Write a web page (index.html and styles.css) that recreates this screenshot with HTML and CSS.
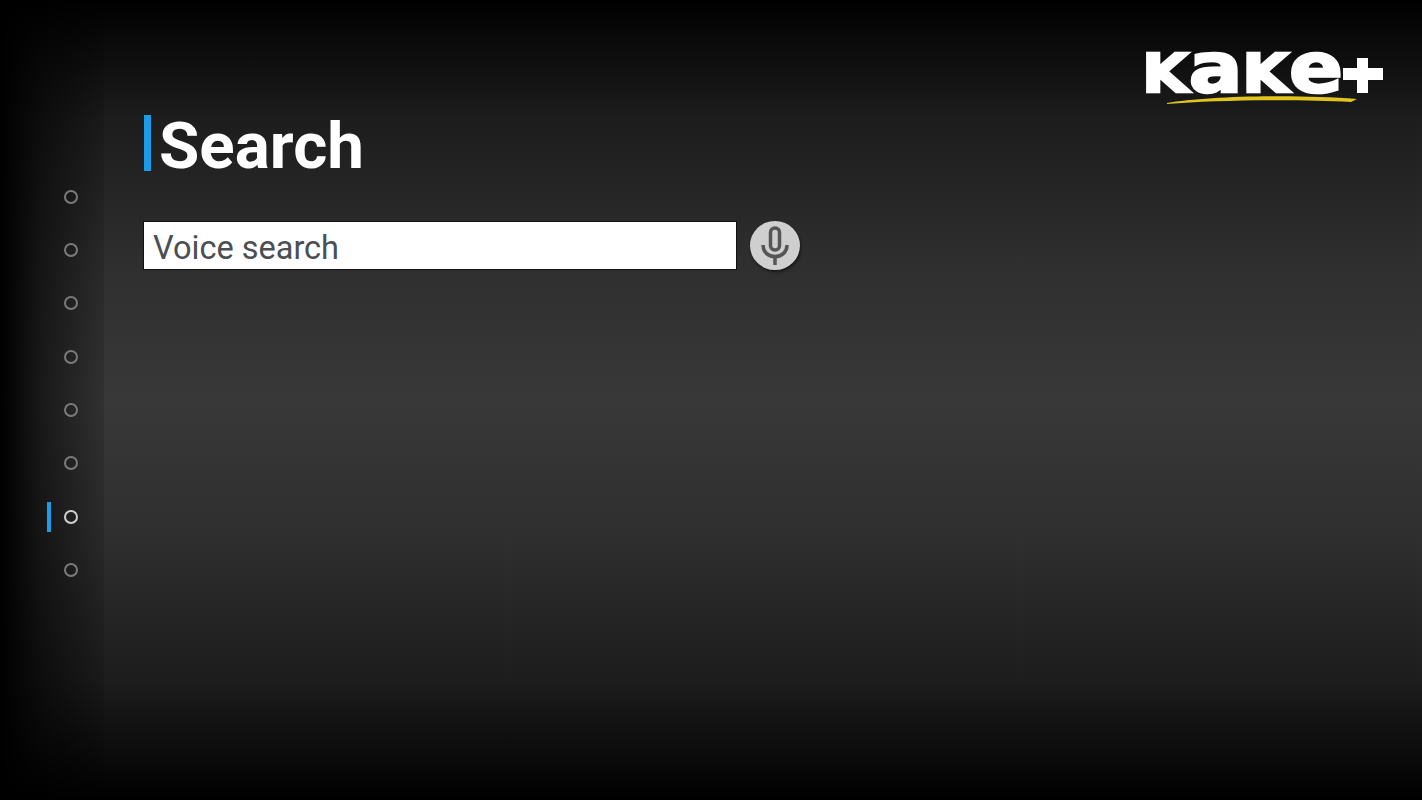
FILE: index.html
```html
<!DOCTYPE html>
<html lang="en">
<head>
  <meta charset="UTF-8">
  <title>Search</title>
  <link rel="stylesheet" href="styles.css">
</head>
<body>
  <!-- side menu -->
  <nav class="side-nav">
    <div class="nav-item"><span class="dot"></span></div>
    <div class="nav-item"><span class="dot"></span></div>
    <div class="nav-item"><span class="dot"></span></div>
    <div class="nav-item"><span class="dot"></span></div>
    <div class="nav-item"><span class="dot"></span></div>
    <div class="nav-item"><span class="dot"></span></div>
    <div class="nav-item active"><span class="marker"></span><span class="dot"></span></div>
    <div class="nav-item"><span class="dot"></span></div>
  </nav>

  <main class="main">
    <div class="logo-row">
      <svg class="logo" width="260" height="94" viewBox="-20 0 260 94">
        <text class="logo-text" x="-4" y="81" textLength="201" lengthAdjust="spacingAndGlyphs"><tspan class="logo-k">K</tspan>a<tspan class="logo-k">K</tspan>e</text>
        <path class="logo-plus" d="M211 47h11v10h15v12h-15v13h-11V69h-14V57h14z"/>
        <path class="logo-swoosh" d="M21 92C60 85 150 83 211 88L205 91C150 88 70 89 21 93z"/>
      </svg>
    </div>

    <h1 class="title">Search</h1>

    <div class="search-row">
      <div class="search-box">Voice search</div>
      <button class="mic-button">
        <svg width="30" height="40" viewBox="0 0 30 40">
          <rect class="mic-head" x="10.5" y="2" width="9" height="22" rx="4.5"/>
          <path class="mic-stand" d="M3 19c0 7 5 11.500 12 11.500s12-4.500 12-11.500M15 30v9"/>
        </svg>
      </button>
    </div>
  </main>
</body>
</html>
```

FILE: styles.css
```css
html, body {
  height: 100%;
}
body {
  margin: 0;
  display: flex;
  overflow: hidden;
  font-family: Roboto, 'Liberation Sans', sans-serif;
  background: linear-gradient(to bottom, #000 0%, #1d1d1d 15%, #2f2f2f 33%, #383838 50%, #2f2f2f 67%, #1d1d1d 85%, #000 100%);
}

/* side menu */
.side-nav {
  width: 104px;
  flex-shrink: 0;
  padding-top: 170px;
  box-sizing: border-box;
  background: linear-gradient(to right, #000 0%, rgba(0, 0, 0, 0.55) 40%, rgba(0, 0, 0, 0.12) 100%);
}
.nav-item {
  height: 53.33px;
  display: flex;
  align-items: center;
  justify-content: center;
  padding-left: 38px;
  box-sizing: border-box;
  position: relative;
}
.dot {
  width: 10px;
  height: 10px;
  border: 2px solid #7a7a7a;
  border-radius: 50%;
}
.nav-item.active .dot {
  border-color: #d0d0d0;
}
.marker {
  position: absolute;
  left: 47px;
  top: 12px;
  width: 4px;
  height: 30px;
  background-color: #1c9ce6;
}

.main {
  flex: 1;
  padding-left: 39px;
}
.logo-row {
  display: flex;
  justify-content: flex-end;
  padding: 11px 36px 0 0;
  height: 94px;
}
.logo {
  overflow: visible;
}
.logo-text {
  font-family: 'DejaVu Sans', sans-serif;
  font-weight: bold;
  font-size: 70px;
  fill: #fff;
  stroke: #fff;
  stroke-width: 2.5px;
}
.logo-k {
  font-size: 53px;
}
.logo-plus {
  fill: #fff;
}
.logo-swoosh {
  fill: #e3c31e;
}

.title {
  margin: 10px 0 0 1px;
  padding-left: 8px;
  border-left: 7px solid #1c9ce6;
  height: 56px;
  line-height: 61px;
  font-size: 65.5px;
  font-weight: bold;
  color: #fff;
  width: max-content;
}

.search-row {
  display: flex;
  align-items: center;
  gap: 13px;
  margin-top: 50px;
}
.search-box {
  width: 583px;
  height: 47px;
  line-height: 53px;
  padding-left: 9px;
  background-color: #fff;
  border: 1px solid #111;
  font-size: 32.5px;
  color: #4b4f54;
}
.mic-button {
  width: 50px;
  height: 49px;
  padding: 0;
  border: none;
  border-radius: 50%;
  background-color: #cfcfcf;
  box-shadow: 1px 2px 3px rgba(0, 0, 0, 0.5);
  display: flex;
  align-items: center;
  justify-content: center;
}
.mic-head {
  fill: none;
  stroke: #555;
  stroke-width: 3.5;
}
.mic-stand {
  fill: none;
  stroke: #555;
  stroke-width: 3.5;
}
```
